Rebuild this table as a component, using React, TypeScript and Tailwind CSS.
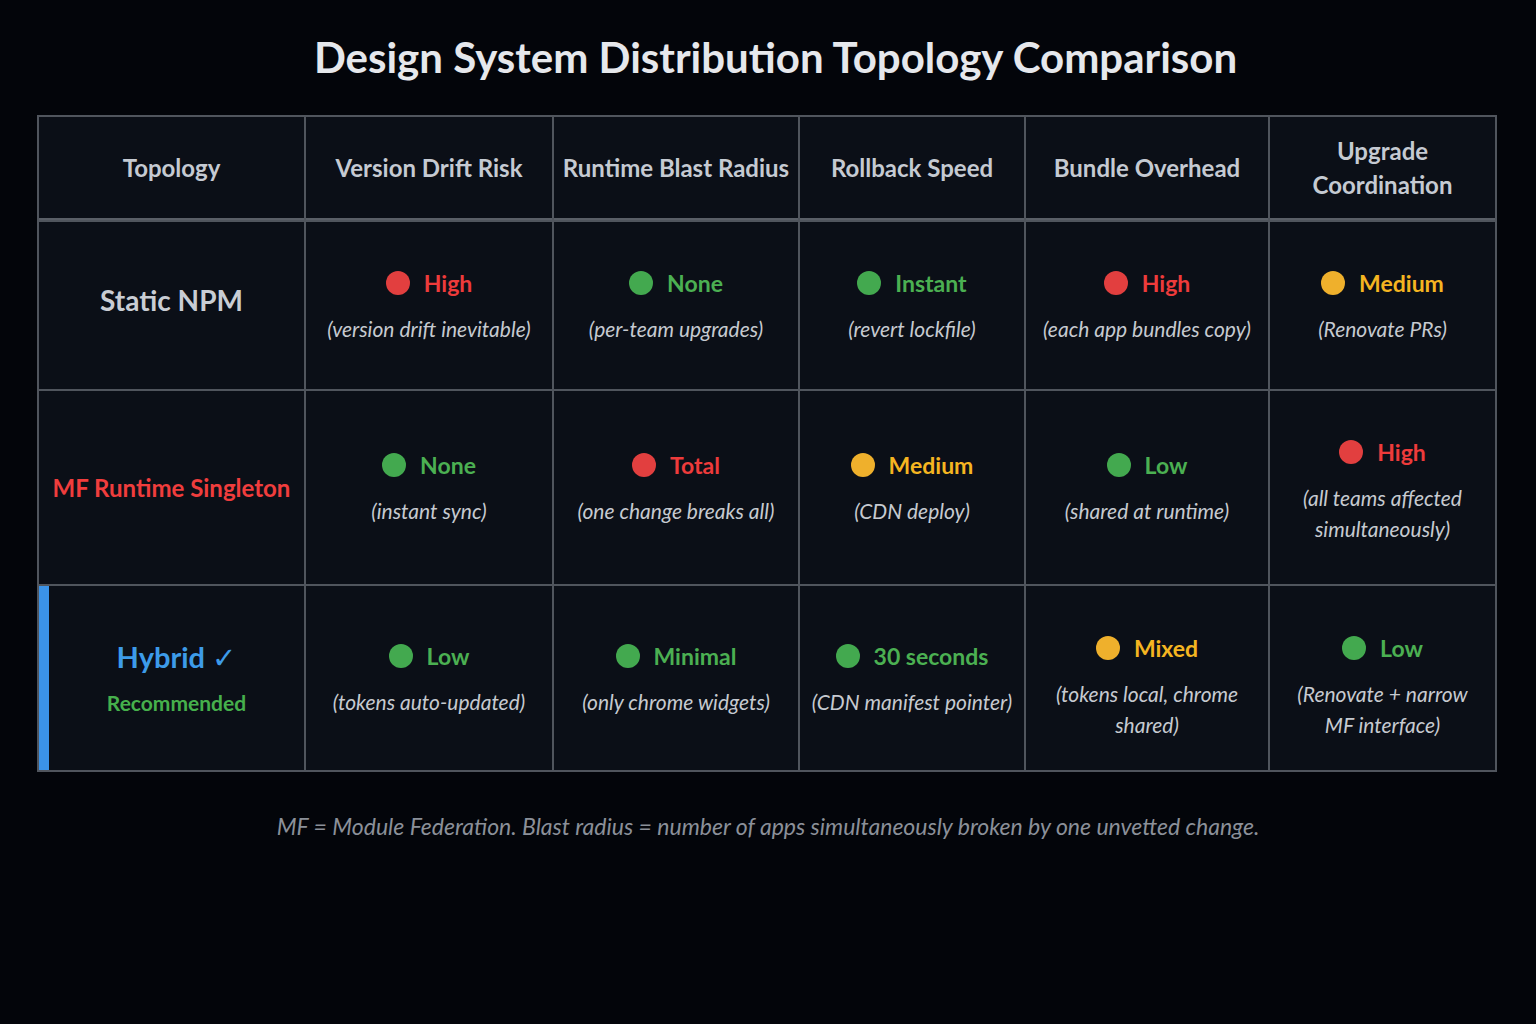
import React from "react";

type Level = "red" | "green" | "amber";

const dotCls: Record<Level, string> = {
  red: "bg-[#e23f3f]",
  green: "bg-[#43a94f]",
  amber: "bg-[#efb02c]",
};
const textCls: Record<Level, string> = {
  red: "text-[#ee3b3b]",
  green: "text-[#4bb052]",
  amber: "text-[#f5b521]",
};

type Cell = { level: Level; label: string; desc: string[]; pad?: string };

const rows: { name: React.ReactNode; cells: Cell[] }[] = [
  {
    name: <div className="mb-[12px] text-[28px] font-bold text-[#c9cdd4]">Static NPM</div>,
    cells: [
      { level: "red", label: "High", desc: ["(version drift inevitable)"] },
      { level: "green", label: "None", desc: ["(per-team upgrades)"] },
      { level: "green", label: "Instant", desc: ["(revert lockfile)"] },
      { level: "red", label: "High", desc: ["(each app bundles copy)"] },
      { level: "amber", label: "Medium", desc: ["(Renovate PRs)"] },
    ],
  },
  {
    name: <div className="text-[24px] font-bold text-[#f03d3d]">MF Runtime Singleton</div>,
    cells: [
      { level: "green", label: "None", desc: ["(instant sync)"] },
      { level: "red", label: "Total", desc: ["(one change breaks all)"] },
      { level: "amber", label: "Medium", desc: ["(CDN deploy)"] },
      { level: "green", label: "Low", desc: ["(shared at runtime)"] },
      { level: "red", label: "High", desc: ["(all teams affected", "simultaneously)"], pad: "pt-[4px]" },
    ],
  },
  {
    name: (
      <div className="flex flex-col items-center">
        <div className="text-[29px] font-bold leading-[36px] text-[#3d9be9]">Hybrid ✓</div>
        <div className="mt-[14px] text-[21px] font-bold leading-[28px] text-[#46b04c]">Recommended</div>
      </div>
    ),
    cells: [
      { level: "green", label: "Low", desc: ["(tokens auto-updated)"] },
      { level: "green", label: "Minimal", desc: ["(only chrome widgets)"] },
      { level: "green", label: "30 seconds", desc: ["(CDN manifest pointer)"] },
      { level: "amber", label: "Mixed", desc: ["(tokens local, chrome", "shared)"], pad: "pt-[16px]" },
      { level: "green", label: "Low", desc: ["(Renovate + narrow", "MF interface)"], pad: "pt-[16px]" },
    ],
  },
];

const headers = [
  ["Topology"],
  ["Version Drift Risk"],
  ["Runtime Blast Radius"],
  ["Rollback Speed"],
  ["Bundle Overhead"],
  ["Upgrade", "Coordination"],
];

function ValueCell({ c }: { c: Cell }) {
  return (
    <div className={`flex flex-col items-center justify-center bg-[#0b0f17] px-2 ${c.pad ?? ""}`}>
      <div className="flex items-center gap-[14px]">
        <span className={`h-[24px] w-[24px] rounded-full ${dotCls[c.level]}`} />
        <span className={`text-[23px] font-bold leading-[32px] ${textCls[c.level]}`}>{c.label}</span>
      </div>
      <div className="mt-[14px] flex flex-col items-center text-[21px] italic leading-[31px] text-[#c6cad0]">
        {c.desc.map((d, i) => (
          <span key={i}>{d}</span>
        ))}
      </div>
    </div>
  );
}

export default function App() {
  return (
    <div
      className="min-h-[1024px] w-full bg-[#03050a] pt-[32px]"
      style={{ fontFamily: "Lato, 'Noto Sans', 'DejaVu Sans', sans-serif" }}
    >
      <h1 className="pl-[15px] text-center text-[42px] font-bold leading-[50px] text-[#e6e8ec]">
        Design System Distribution Topology Comparison
      </h1>
      <div className="mx-auto mt-[33px] grid w-[1460px] -translate-x-[1px] grid-cols-[265px_246px_244px_224px_242px_225px] grid-rows-[103px_167px_193px_184px] gap-[2px] bg-[#50555d] p-[2px]">
        {headers.map((h, i) => (
          <div
            key={i}
            className="flex flex-col items-center justify-center border-b-[2px] border-[#5a5f67] bg-[#0b0f17] text-[24px] font-bold leading-[34px] text-[#c5cad2]"
          >
            {h.map((t, j) => (
              <span key={j}>{t}</span>
            ))}
          </div>
        ))}
        {rows.map((r, ri) => (
          <React.Fragment key={ri}>
            <div
              className={`flex items-center justify-center bg-[#0b0f17] ${
                ri === 2 ? "border-l-[10px] border-[#3b93e8]" : ""
              }`}
            >
              {r.name}
            </div>
            {r.cells.map((c, ci) => (
              <ValueCell key={ci} c={c} />
            ))}
          </React.Fragment>
        ))}
      </div>
      <p className="mt-[39px] text-center text-[23px] italic leading-[30px] text-[#8b9099]">
        MF = Module Federation. Blast radius = number of apps simultaneously broken by one unvetted change.
      </p>
    </div>
  );
}
